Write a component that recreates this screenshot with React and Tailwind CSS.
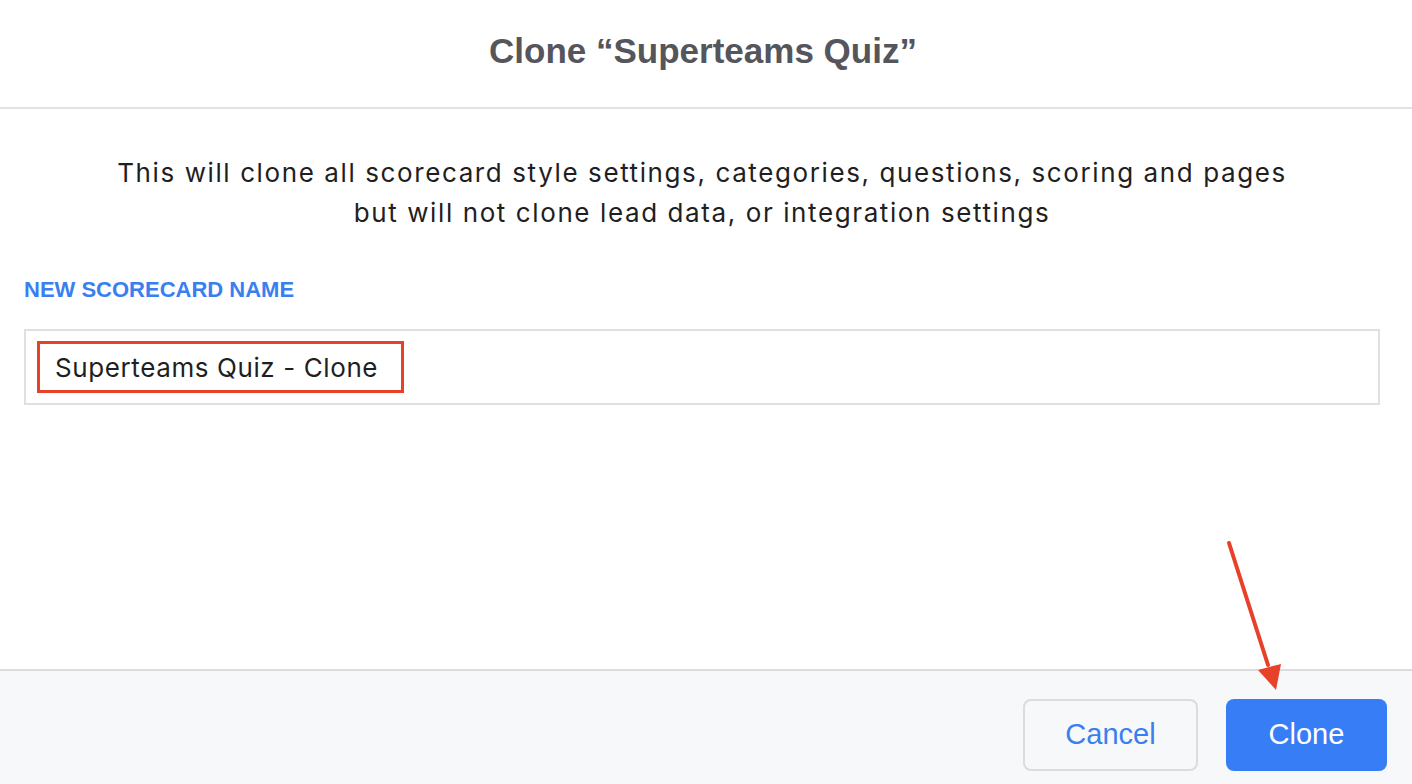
import React from 'react';

const App = () => {
    return (
        <div className="relative w-[1412px] h-[784px] bg-white flex flex-col overflow-hidden font-['Liberation_Sans',Arial,sans-serif]">
            {/* Header */}
            <div className="h-[109px] shrink-0 flex items-center justify-center border-b-2 border-[#e2e2e4]">
                <h1 className="text-[35px] font-bold text-[#55555c] -mt-[4px] pr-[6px]">Clone “Superteams Quiz”</h1>
            </div>

            {/* Body */}
            <div className="flex-1 pl-6 pr-[32px]">
                <p className="mt-[44px] text-center text-[26px] leading-[40px] text-[#1f1f22] tracking-[1.6px] font-['Inter',sans-serif]">
                    This will clone all scorecard style settings, categories, questions, scoring and pages
                    <br />
                    but will not clone lead data, or integration settings
                </p>
                <div className="mt-[40px] text-[22px] leading-[33px] font-bold text-[#3a7ff0]">NEW SCORECARD NAME</div>
                <div className="mt-[23px] h-[76px] border-2 border-[#e0e0e2] flex items-center px-[11px]">
                    <span className="border-[3px] border-[#e8412a] h-[52px] pl-[15px] pr-[23px] flex items-center text-[26px] text-[#1f1f22] font-['Inter',sans-serif] tracking-[0.6px]">
                        Superteams Quiz - Clone
                    </span>
                </div>
            </div>

            {/* Footer */}
            <div className="h-[115px] shrink-0 bg-[#f7f8fa] border-t-2 border-[#dcdcde] flex items-center justify-end gap-[28px] pr-[25px] pt-[14px]">
                <button className="w-[175px] h-[72px] rounded-[8px] border-2 border-[#dcdcde] bg-[#f7f8fa] text-[29px] text-[#3a7ff0]">
                    Cancel
                </button>
                <button className="w-[161px] h-[72px] rounded-[8px] bg-[#377ef6] text-[29px] text-white">
                    Clone
                </button>
            </div>

            {/* Annotation arrow */}
            <svg className="absolute left-0 top-0 pointer-events-none" width="1412" height="784">
                <line x1="1229" y1="543" x2="1268" y2="665" stroke="#e8412a" strokeWidth="4" strokeLinecap="round" />
                <polygon points="1258,670 1281,664 1276,690" fill="#e8412a" />
            </svg>
        </div>
    );
};

export default App;
